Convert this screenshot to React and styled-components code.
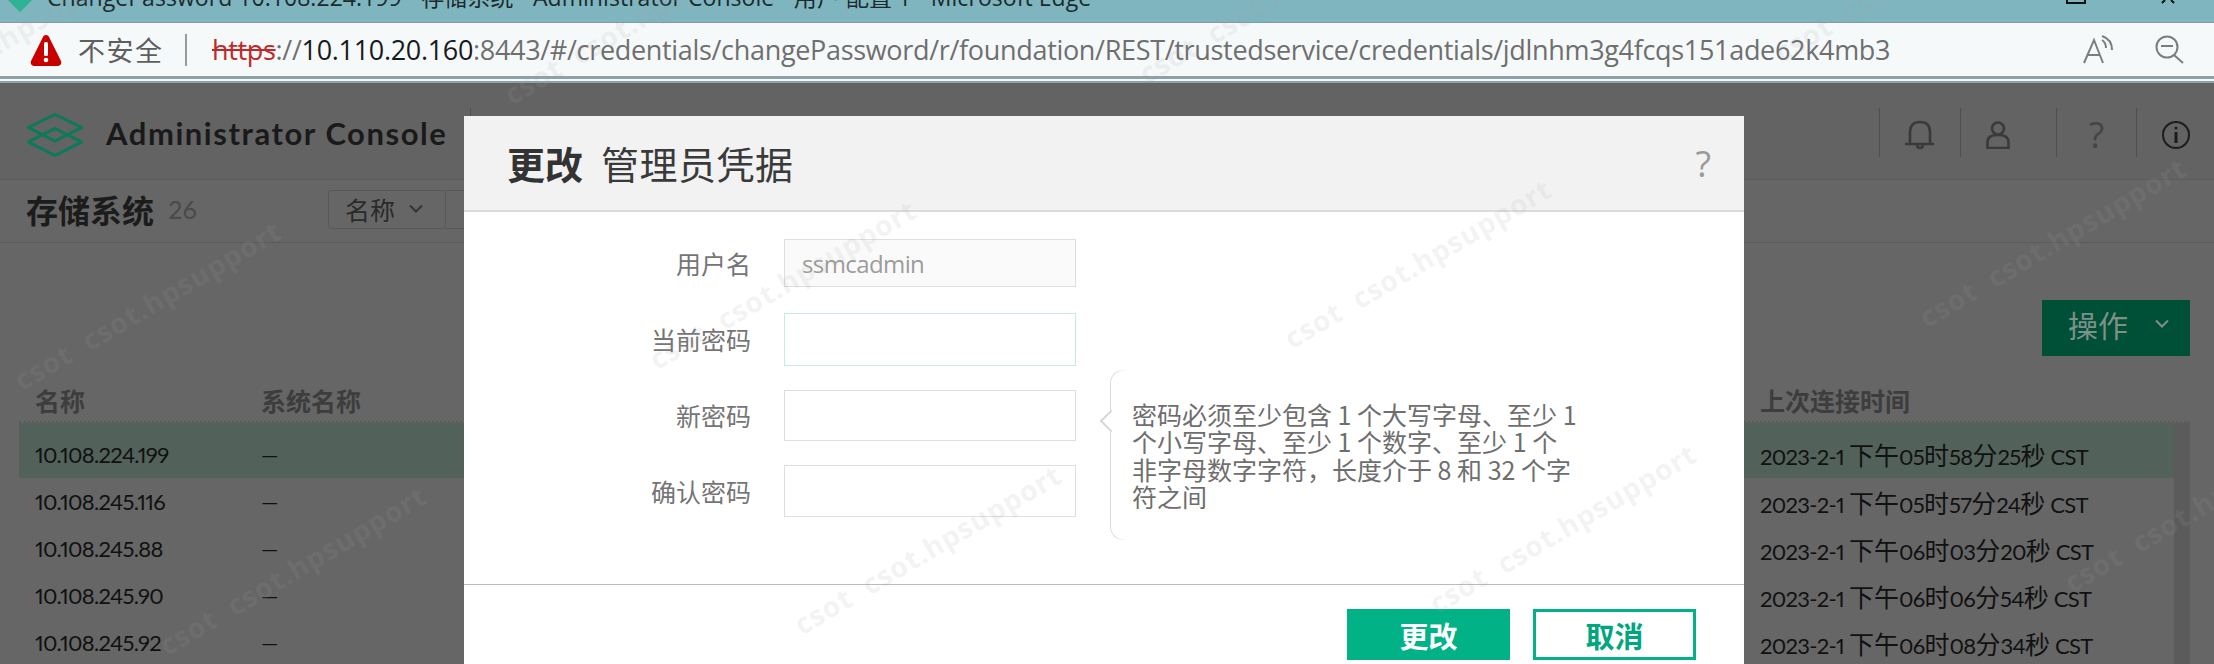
import React from "react";
import styled, { createGlobalStyle } from "styled-components";

const CJK = '"Noto Sans CJK SC", "Noto Sans", sans-serif';
const LAT = 'Lato, "Noto Sans CJK SC", sans-serif';

const Global = createGlobalStyle`
  html, body { margin: 0; padding: 0; background: #666; }
  * { box-sizing: border-box; }
`;

const Page = styled.div`
  position: relative;
  width: 2214px;
  height: 664px;
  overflow: hidden;
  font-family: ${CJK};
  background: #666;
`;

/* browser chrome */
const TitleBar = styled.div`
  height: 23px;
  background: #7fb5bf;
  border-bottom: 1px solid #86999e;
  display: flex;
  align-items: flex-start;
  overflow: hidden;
  padding-left: 47px;
  position: relative;
`;
const TitleText = styled.div`
  font: 23px/24px "Open Sans", ${CJK};
  letter-spacing: 0.05px;
  color: #1b2a2d;
  margin-top: -15px;
  white-space: nowrap;
`;
const TabIcon = styled.div`
  position: absolute;
  left: 10px;
  top: -12px;
  width: 20px;
  height: 20px;
  background: #2fb394;
  transform: rotate(45deg);
`;
const WindowButtons = styled.div`
  position: absolute;
  right: 36px;
  top: 0;
  display: flex;
  gap: 72px;
`;
const AddressBar = styled.div`
  height: 56px;
  background: #f6f9fa;
  display: flex;
  align-items: center;
  padding-left: 30px;
  border-bottom: 3px solid #8ea1a6;
`;
const Gap = styled.div`
  height: 2px;
  background: #f6f9fa;
`;
const GapLine = styled.div`
  height: 2px;
  background: #8ea1a6;
`;
const NotSecure = styled.span`
  font-size: 27px;
  color: #5f5f5f;
  margin-left: 16px;
  width: 107px;
  letter-spacing: 1.5px;
`;
const Sep = styled.span`
  width: 2px;
  height: 32px;
  background: #9a9a9a;
  margin-right: 25px;
`;
const Url = styled.div`
  font: 27px "Open Sans", sans-serif;
  letter-spacing: -0.32px;
  color: #6f6f6f;
  white-space: nowrap;
  width: 1871px;
`;
const Https = styled.span`
  color: #bf2a28;
  text-decoration: line-through;
`;
const Host = styled.span`
  color: #1a1a1a;
`;
const AddressIcons = styled.div`
  display: flex;
  gap: 40px;
  align-items: center;
`;

/* dimmed console */
const TopBar = styled.header`
  height: 97px;
  background: #636363;
  border-bottom: 1px solid #5c5c5c;
  display: flex;
  align-items: center;
  padding-left: 27px;
  padding-top: 8px;
`;
const Brand = styled.div`
  font: 700 31px ${LAT};
  letter-spacing: 1.55px;
  color: #1a1a1a;
  margin-left: 23px;
  width: 364px;
  flex: none;
  margin-top: -4px;
  white-space: nowrap;
`;
const HeaderTool = styled.div`
  width: ${(p) => p.$w}px;
  height: 49px;
  margin-top: -6px;
  margin-right: ${(p) => (p.$spacer ? "auto" : "0")};
  padding: 6px ${(p) => p.$shift || 0}px 0 0;
  border-left: 1px solid #4f4f4f;
  display: flex;
  align-items: center;
  justify-content: center;
  color: #3f3f3f;
`;
const ToolQ = styled.span`
  font: 36px "Open Sans", sans-serif;
  color: #454545;
  line-height: 1;
`;
const SubBar = styled.div`
  height: 63px;
  border-bottom: 1px solid #5c5c5c;
  display: flex;
  align-items: center;
  padding-left: 26px;
  padding-bottom: 4px;
`;
const Heading = styled.h1`
  font: 700 32px ${CJK};
  color: #1c1c1c;
  margin: 0;
  width: 142px;
`;
const Count = styled.span`
  font: 25px ${LAT};
  color: #4a4a4a;
  width: 160px;
`;
const Select = styled.div`
  width: 118px;
  height: 39px;
  border: 1px solid #585858;
  border-radius: 3px;
  display: flex;
  align-items: center;
  gap: 14px;
  padding-left: 16px;
  font-size: 25px;
  color: #2a2a2a;
`;
const SelectNext = styled.div`
  width: 24px;
  height: 39px;
  border: 1px solid #585858;
  border-left: 0;
`;
const ActionRow = styled.div`
  display: flex;
  justify-content: flex-end;
  padding: 57px 24px 0 0;
`;
const ActionButton = styled.div`
  width: 148px;
  height: 56px;
  background: #004f37;
  color: #7e9188;
  display: flex;
  align-items: center;
  font-size: 30px;
  padding-left: 26px;
  padding-bottom: 8px;
  gap: 27px;
`;
const TableWrap = styled.div`
  margin: 0 24px 0 19px;
`;
const HeadRow = styled.div`
  display: flex;
  height: 67px;
  align-items: flex-end;
  padding: 0 16px 3px 16px;
  border-bottom: 2px dotted #5a5a5a;
  font-weight: 700;
  font-size: 25px;
  color: #3d3d3d;
`;
const Body = styled.div`
  display: flex;
`;
const Rows = styled.div`
  flex: 1;
`;
const Scrollbar = styled.div`
  width: 16px;
  height: 260px;
  background: #5b5b5b;
`;
const Row = styled.div`
  display: flex;
  align-items: center;
  height: ${(p) => (p.$active ? 55 : 47)}px;
  padding: ${(p) => (p.$active ? "7px" : "0")} 0 0 16px;
  background: ${(p) => (p.$active ? "#52615a" : "transparent")};
  font: 22px ${LAT};
  font-feature-settings: "pnum";
  letter-spacing: -0.7px;
  color: #111;
`;
const NameCell = styled.div`
  width: 226px;
  flex: none;
`;
const SysCell = styled.div`
  flex: 1;
`;
const TimeCell = styled.div`
  width: 414px;
  flex: none;
  white-space: nowrap;
`;
const Han = styled.span`
  font-size: 25px;
  letter-spacing: 0;
`;

/* dialog */
const Modal = styled.section`
  position: absolute;
  left: 464px;
  top: 116px;
  width: 1280px;
  height: 548px;
  background: #fff;
  display: flex;
  flex-direction: column;
`;
const ModalHeader = styled.div`
  height: 96px;
  flex: none;
  background: #f2f2f2;
  border-bottom: 2px solid #dcdcdc;
  display: flex;
  align-items: center;
  padding: 0 33px 0 43px;
  font-size: 38px;
  line-height: 1;
  color: #3a3a3a;
`;
const TitleBold = styled.strong`
  font-weight: 700;
  margin-right: 18px;
  color: #333;
`;
const ModalTitle = styled.span`
  flex: 1;
  letter-spacing: 0.5px;
`;
const HelpMark = styled.span`
  font: 36px "Open Sans", sans-serif;
  color: #9a9a9a;
`;
const ModalBody = styled.div`
  height: 373px;
  flex: none;
  display: flex;
  padding-top: 13px;
  border-bottom: 1px solid #bcbcbc;
`;
const Form = styled.div`
  width: 612px;
`;
const Field = styled.div`
  height: 76px;
  display: flex;
  align-items: center;
`;
const Label = styled.label`
  width: 287px;
  text-align: right;
  font-size: 25px;
  color: #757575;
  margin-right: 33px;
`;
const Input = styled.div`
  width: 292px;
  height: ${(p) => p.$h}px;
  border: 1px solid ${(p) => (p.$focus ? "#c4ece3" : "#dedede")};
  background: ${(p) => (p.$disabled ? "#fafafa" : "#fff")};
  font: 24px "Open Sans", sans-serif;
  letter-spacing: -0.6px;
  color: #9c9c9c;
  display: flex;
  align-items: center;
  padding-left: 17px;
`;
const Hint = styled.div`
  position: relative;
  margin: 145px 0 0 34px;
  width: 470px;
  height: 168px;
  padding: 31px 0 0 22px;
  font-size: 25px;
  line-height: 27.3px;
  color: #6e6e6e;
  &::after {
    content: "";
    position: absolute;
    left: 0;
    top: 0;
    width: 15px;
    height: 100%;
    border: 1px solid #d9d9d9;
    border-right: 0;
    border-radius: 13px 0 0 13px;
    -webkit-mask-image: linear-gradient(to right, #000 40%, transparent);
    mask-image: linear-gradient(to right, #000 40%, transparent);
  }
  &::before {
    content: "";
    position: absolute;
    left: -7px;
    top: 43px;
    width: 14px;
    height: 14px;
    background: #fff;
    border-left: 2px solid #d6d6d6;
    border-bottom: 2px solid #d6d6d6;
    transform: rotate(45deg);
    z-index: 1;
  }
`;
const HintText = styled.div`
  width: 448px;
`;
const Footer = styled.div`
  display: flex;
  justify-content: flex-end;
  gap: 23px;
  padding: 24px 48px 0 0;
`;
const Button = styled.div`
  width: 163px;
  height: 51px;
  display: flex;
  align-items: center;
  justify-content: center;
  font-weight: 700;
  font-size: 29px;
  background: ${(p) => (p.$outline ? "#fff" : "#01b287")};
  color: ${(p) => (p.$outline ? "#01a67e" : "#fff")};
  border: 3px solid #01b287;
`;

/* tiled watermark above everything */
const Mark = styled.div`
  position: absolute;
  font: 700 28px "Open Sans", sans-serif;
  letter-spacing: 1px;
  white-space: pre;
  color: rgba(163, 163, 163, 0.14);
  transform-origin: 0 100%;
  transform: rotate(-30.5deg);
  line-height: 30px;
  pointer-events: none;
`;

const marks = [];
for (let r = -2; r <= 1; r++) {
  for (let c = -1; c <= 4; c++) {
    marks.push({ x: 24 + 635 * c + 145 * r, y: 395 - 21 * c + 265 * r });
  }
}

const Logo = () => (
  <svg width="56" height="44" viewBox="0 0 56 44" fill="none" stroke="#0a7a5a" strokeWidth="3" style={{ flex: "none" }}>
    <path d="M28 1.5 L54.5 14.5 L28 28 L1.5 14.5 Z" />
    <path d="M28 15.5 L54.5 29 L28 42.5 L1.5 29 Z" />
  </svg>
);

const Warn = () => (
  <svg width="32" height="32" viewBox="0 0 32 32" style={{ flex: "none" }}>
    <path d="M16 1 C18 1 19 2.5 20 5 L31 27 C32 30 30 32 27 32 L5 32 C2 32 0 30 1 27 L12 5 C13 2.5 14 1 16 1Z" fill="#c90000" />
    <rect x="14" y="8" width="4" height="14" rx="1.5" fill="#fff" />
    <circle cx="16" cy="26" r="2.3" fill="#fff" />
  </svg>
);

const ReadAloud = () => (
  <svg width="32" height="29" viewBox="0 0 32 29" fill="none" stroke="#7d7d7d" strokeWidth="2" style={{ flex: "none" }}>
    <path d="M1 28 L11 5 L20 28 M4.5 20 L17 20" />
    <path d="M19 5 C22 7 23 10 23 13 M19 1 C25 3 29 8 29 15" />
  </svg>
);

const ZoomOut = () => (
  <svg width="30" height="29" viewBox="0 0 30 29" fill="none" stroke="#7d7d7d" strokeWidth="2" style={{ flex: "none" }}>
    <circle cx="12" cy="12" r="10.5" />
    <path d="M6 11 H18 M19 20 L28 28" />
  </svg>
);

const Bell = () => (
  <svg width="30" height="30" viewBox="0 0 30 30" fill="none" stroke="#3a3a3a" strokeWidth="2.6">
    <path d="M5 24 V12 C5 5 9 2 15 2 C21 2 25 5 25 12 V24" />
    <path d="M0 24 H29 M12 25 C12 29 18 29 18 25" />
  </svg>
);
const Person = () => (
  <svg width="24" height="28" viewBox="0 0 24 28" fill="none" stroke="#3a3a3a" strokeWidth="2.6">
    <circle cx="12" cy="7.5" r="6" />
    <path d="M1.5 27 V21 C1.5 16 6 14 12 14 C18 14 22.5 16 22.5 21 V27 Z" />
  </svg>
);
const Info = () => (
  <svg width="30" height="30" viewBox="0 0 30 30" fill="none" stroke="#1c1c1c" strokeWidth="2">
    <circle cx="15" cy="15" r="13" />
    <path d="M15 12 V23" strokeWidth="3" />
    <circle cx="15" cy="8" r="1.5" fill="#1c1c1c" stroke="none" />
  </svg>
);
const Chevron = ({ color, size = 14 }) => (
  <svg width={size} height={size * 0.65} viewBox="0 0 14 9" fill="none" stroke={color} strokeWidth="2">
    <path d="M1 1.5 L7 7.5 L13 1.5" />
  </svg>
);

const Time = ({ value }) =>
  value.split(/([\u4e00-\u9fff]+)/).map((part, i) =>
    i % 2 ? <Han key={i}>{part}</Han> : <React.Fragment key={i}>{part}</React.Fragment>
  );

const rows = [
  ["10.108.224.199", "2023-2-1 下午05时58分25秒 CST"],
  ["10.108.245.116", "2023-2-1 下午05时57分24秒 CST"],
  ["10.108.245.88", "2023-2-1 下午06时03分20秒 CST"],
  ["10.108.245.90", "2023-2-1 下午06时06分54秒 CST"],
  ["10.108.245.92", "2023-2-1 下午06时08分34秒 CST"],
];

const fields = [
  { label: "用户名", h: 48, disabled: true, value: "ssmcadmin" },
  { label: "当前密码", h: 53, focus: true },
  { label: "新密码", h: 51 },
  { label: "确认密码", h: 52 },
];

export default function App() {
  return (
    <Page>
      <Global />
      <TitleBar>
        <TabIcon />
        <TitleText>ChangePassword 10.108.224.199 - 存储系统 - Administrator Console - 用户 配置 1 - Microsoft Edge</TitleText>
        <WindowButtons>
          <svg width="20" height="4" fill="none" stroke="#111" strokeWidth="2"><path d="M1 0 V3 H19 V0" /></svg>
          <svg width="20" height="4" fill="none" stroke="#111" strokeWidth="2"><path d="M4 3 L7 0 M16 3 L13 0" /></svg>
        </WindowButtons>
      </TitleBar>
      <AddressBar>
        <Warn />
        <NotSecure>不安全</NotSecure>
        <Sep />
        <Url>
          <Https>https</Https>://<Host>10.110.20.160</Host>:8443/#/credentials/changePassword/r/foundation/REST/trustedservice/credentials/jdlnhm3g4fcqs151ade62k4mb3
        </Url>
        <AddressIcons>
          <ReadAloud />
          <ZoomOut />
        </AddressIcons>
      </AddressBar>
      <Gap />
      <GapLine />
      <TopBar>
        <Logo />
        <Brand>Administrator Console</Brand>
        <HeaderTool $w={4} $spacer />
        <HeaderTool $w={81}><Bell /></HeaderTool>
        <HeaderTool $w={96} $shift={22}><Person /></HeaderTool>
        <HeaderTool $w={80}><ToolQ>?</ToolQ></HeaderTool>
        <HeaderTool $w={78}><Info /></HeaderTool>
      </TopBar>
      <SubBar>
        <Heading>存储系统</Heading>
        <Count>26</Count>
        <Select>名称 <Chevron color="#333" /></Select>
        <SelectNext />
      </SubBar>
      <ActionRow>
        <ActionButton>操作 <Chevron color="#7e9188" /></ActionButton>
      </ActionRow>
      <TableWrap>
        <HeadRow>
          <NameCell>名称</NameCell>
          <SysCell>系统名称</SysCell>
          <TimeCell>上次连接时间</TimeCell>
        </HeadRow>
        <Body>
          <Rows>
            {rows.map(([name, time], i) => (
              <Row key={name} $active={i === 0}>
                <NameCell>{name}</NameCell>
                <SysCell>—</SysCell>
                <TimeCell><Time value={time} /></TimeCell>
              </Row>
            ))}
          </Rows>
          <Scrollbar />
        </Body>
      </TableWrap>

      <Modal>
        <ModalHeader>
          <TitleBold>更改</TitleBold>
          <ModalTitle>管理员凭据</ModalTitle>
          <HelpMark>?</HelpMark>
        </ModalHeader>
        <ModalBody>
          <Form>
            {fields.map((f) => (
              <Field key={f.label}>
                <Label>{f.label}</Label>
                <Input $h={f.h} $focus={f.focus} $disabled={f.disabled}>{f.value}</Input>
              </Field>
            ))}
          </Form>
          <Hint>
            <HintText>密码必须至少包含 1 个大写字母、至少 1 个小写字母、至少 1 个数字、至少 1 个非字母数字字符，长度介于 8 和 32 个字符之间</HintText>
          </Hint>
        </ModalBody>
        <Footer>
          <Button>更改</Button>
          <Button $outline>取消</Button>
        </Footer>
      </Modal>

      {marks.map((m) => (
        <Mark key={`${m.x}-${m.y}`} style={{ left: m.x, top: m.y - 30 }}>{"csot  csot.hpsupport"}</Mark>
      ))}
    </Page>
  );
}
